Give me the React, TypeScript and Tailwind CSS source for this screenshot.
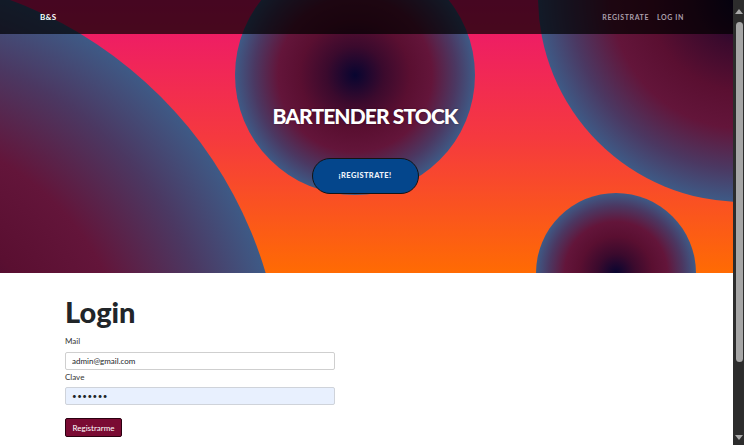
const bubble =
  'absolute rounded-full bg-[radial-gradient(circle_closest-side,#080530_0%,#3b0a2d_24%,#5a0f31_46%,#63153a_64%,#4b3862_84%,#3e5a86_100%)]';

function Scrollbar() {
  return (
    <div className="flex h-full w-[11px] shrink-0 flex-col items-center bg-[#2c2c2c]">
      <div className="flex h-[22px] w-full items-center justify-center">
        <div className="h-0 w-0 border-x-[4px] border-b-[5px] border-x-transparent border-b-[#a9a9a9]" />
      </div>
      <div className="ml-[2px] h-[340px] w-[7px] rounded-[4px] bg-[#a6a6a6]" />
      <div className="flex-1" />
      <div className="flex h-[16px] w-full items-center justify-center">
        <div className="h-0 w-0 border-x-[4px] border-t-[5px] border-x-transparent border-t-[#a9a9a9]" />
      </div>
    </div>
  );
}

function Hero() {
  return (
    <header className="relative h-[273px] shrink-0 overflow-hidden bg-[linear-gradient(180deg,#ec1470_0%,#f5393f_50%,#ff6b03_100%)]">
      {/* background bubbles */}
      <div className={`${bubble} left-[-553px] top-[-26px] h-[836px] w-[836px]`} />
      <div className={`${bubble} left-[235px] top-[-45px] h-[240px] w-[240px]`} />
      <div className={`${bubble} left-[538px] top-[-208px] h-[410px] w-[410px]`} />
      <div className={`${bubble} left-[536px] top-[193px] h-[160px] w-[160px]`} />

      <nav className="relative z-10 flex h-[34px] items-center justify-between bg-black/70 pl-[40px] pr-[49px]">
        <span className="text-[8px] font-bold tracking-[0.3px] text-white">B&amp;S</span>
        <div className="flex gap-[8px] text-[7px] font-bold uppercase tracking-[0.6px] text-[#ab9fab]">
          <span>Registrate</span>
          <span>Log in</span>
        </div>
      </nav>

      <div className="relative z-10 flex flex-col items-center pr-[3px] pt-[69px]">
        <h1 className="text-[21px] font-black leading-[26px] tracking-[-0.9px] text-white [text-shadow:0_0_2px_rgba(0,0,0,0.35)]">
          BARTENDER STOCK
        </h1>
        <button className="mt-[29px] flex h-[36px] w-[107px] items-center justify-center rounded-full border border-[#141414] bg-[#04468c] text-[7.5px] font-black tracking-[0.4px] text-[#eef2fa]">
          ¡REGISTRATE!
        </button>
      </div>
    </header>
  );
}

function LoginForm() {
  return (
    <main className="flex flex-col pl-[65px] text-[#212529]">
      <h2 className="mt-[22px] text-[29px] font-black leading-[34px]">Login</h2>
      <label className="mt-[6px] text-[8px] leading-[12px] text-[#333]">Mail</label>
      <input
        className="mt-[5px] h-[18px] w-[270px] rounded-[2px] border border-[#cfcfcf] bg-white px-[6px] text-[8px] text-[#212529] outline-none"
        defaultValue="admin@gmail.com"
      />
      <label className="mt-[1px] text-[8px] leading-[12px] text-[#333]">Clave</label>
      <input
        type="password"
        className="mt-[4px] h-[18px] w-[270px] rounded-[2px] border border-[#cfd3da] bg-[#e8f0fe] px-[6px] text-[8px] tracking-[0.5px] text-[#212529] outline-none"
        defaultValue="1234567"
      />
      <button className="mt-[13px] flex h-[19px] w-[57px] items-center justify-center rounded-[2px] border border-[#2a0010] bg-[#7a0b33] text-[8px] text-white">
        Registrarme
      </button>
    </main>
  );
}

export default function App() {
  return (
    <div className="flex h-[445px] w-[744px] overflow-hidden bg-white font-['Lato',sans-serif]">
      <div className="flex min-w-0 flex-1 flex-col">
        <Hero />
        <LoginForm />
      </div>
      <Scrollbar />
    </div>
  );
}
